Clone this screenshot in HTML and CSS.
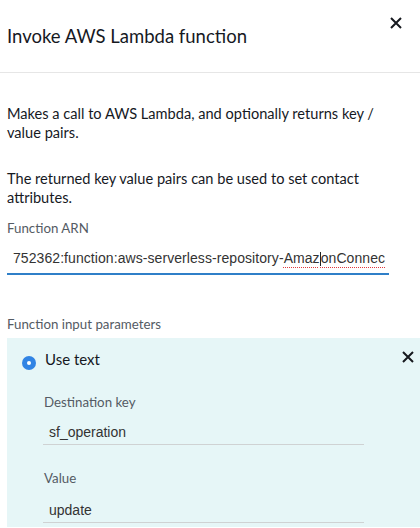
FILE: index.html
```html
<!DOCTYPE html>
<html>
<head>
<meta charset="utf-8">
<link rel="stylesheet" href="styles.css">
</head>
<body>
<div class="header">
  <h1 class="title">Invoke AWS Lambda function</h1>
  <button class="close close-top" aria-label="Close">
    <svg width="12" height="12" viewBox="0 0 12 12"><path d="M1 1L11 11M11 1L1 11" stroke="#16191f" stroke-width="2" fill="none"/></svg>
  </button>
</div>
<div class="content">
  <p class="desc desc-first">Makes a call to AWS Lambda, and optionally returns key / value pairs.</p>
  <p class="desc desc-second">The returned key value pairs can be used to set contact attributes.</p>
  <div class="field">
    <div class="label">Function ARN</div>
    <div class="input input-active">752362:function:aws-serverless-repository-<span class="spell">Amaz<span class="caret"></span>onConnec</span></div>
  </div>
  <div class="section-label">Function input parameters</div>
  <div class="panel">
    <div class="panel-head">
      <span class="radio"><span class="radio-dot"></span></span>
      <span class="radio-label">Use text</span>
      <button class="close close-panel" aria-label="Remove">
        <svg width="12" height="12" viewBox="0 0 12 12"><path d="M1 1L11 11M11 1L1 11" stroke="#16191f" stroke-width="2" fill="none"/></svg>
      </button>
    </div>
    <div class="sub-field sub-key">
      <div class="label">Destination key</div>
      <div class="input input-plain">sf_operation</div>
    </div>
    <div class="sub-field sub-value">
      <div class="label">Value</div>
      <div class="input input-plain">update</div>
    </div>
  </div>
</div>
</body>
</html>
```
FILE: styles.css
```css
* { box-sizing: border-box; }
html, body { margin: 0; padding: 0; background: #fff; }
body {
  font-family: Lato, "Open Sans", sans-serif;
  color: #16191f;
  width: 420px;
  height: 528px;
  overflow: hidden;
}
.header {
  display: flex;
  justify-content: space-between;
  align-items: flex-start;
  height: 73px;
  border-bottom: 1px solid #e6e6e6;
  padding: 0 18px 0 7px;
}
.title {
  margin: 24px 0 0;
  font-size: 18.5px;
  font-weight: 400;
  line-height: 25px;
  color: #16191f;
}
.close {
  border: 0;
  background: transparent;
  padding: 0;
  width: 12px;
  height: 12px;
  display: block;
  cursor: pointer;
  flex: none;
}
.close svg { display: block; }
.close-top { margin-top: 17px; }
.content {
  padding: 0 0 0 7px;
}
.desc {
  margin: 0;
  font-size: 14.6px;
  line-height: 19px;
  width: 385px;
  color: #16191f;
}
.desc-first { margin-top: 31px; }
.desc-second { margin-top: 27px; }
.field { margin-top: 12px; width: 382px; }
.label {
  font-size: 13.3px;
  line-height: 18px;
  color: #545b64;
}
.input {
  font-family: "Liberation Sans", Arial, sans-serif;
  font-size: 14px;
  line-height: 20px;
  white-space: nowrap;
  overflow: hidden;
  color: #333;
}
.input-active {
  margin-top: 11px;
  padding: 0 0 5px 6px;
  border-bottom: 2px solid #2f7fc8;
  height: 27px;
  letter-spacing: 0.07px;
}
.spell {
  text-decoration: underline dotted #e0393e;
  text-decoration-thickness: 1px;
  text-underline-offset: 4px;
}
.caret {
  display: inline-block;
  width: 1px;
  height: 14px;
  background: #222;
  vertical-align: -3px;
}
.section-label {
  margin-top: 40px;
  font-size: 13.3px;
  line-height: 18px;
  color: #545b64;
}
.panel {
  margin-top: 5px;
  background: #e6f6f7;
  padding: 10px 6px 0 15px;
  height: 189px;
}
.panel-head {
  display: flex;
  align-items: flex-start;
  height: 22px;
}
.radio {
  margin-top: 8px;
  width: 14px;
  height: 14px;
  border-radius: 50%;
  background: #3184e4;
  display: flex;
  align-items: center;
  justify-content: center;
  flex: none;
}
.radio-dot {
  width: 4px;
  height: 4px;
  border-radius: 50%;
  background: #fff;
}
.radio-label {
  margin-left: 9px;
  font-size: 15px;
  line-height: 22px;
  flex: 1;
  color: #16191f;
}
.close-panel { margin-top: 3px; }
.sub-field {
  width: 321px;
  margin-left: 21px;
}
.sub-field .label { padding-left: 1px; }
.sub-key { margin-top: 23px; }
.sub-value { margin-top: 24px; }
.input-plain {
  margin-top: 11px;
  padding: 0 0 2px 6px;
  border-bottom: 1px solid #cfd2d3;
  height: 23px;
}
.sub-value .input-plain { margin-top: 13px; }
```
